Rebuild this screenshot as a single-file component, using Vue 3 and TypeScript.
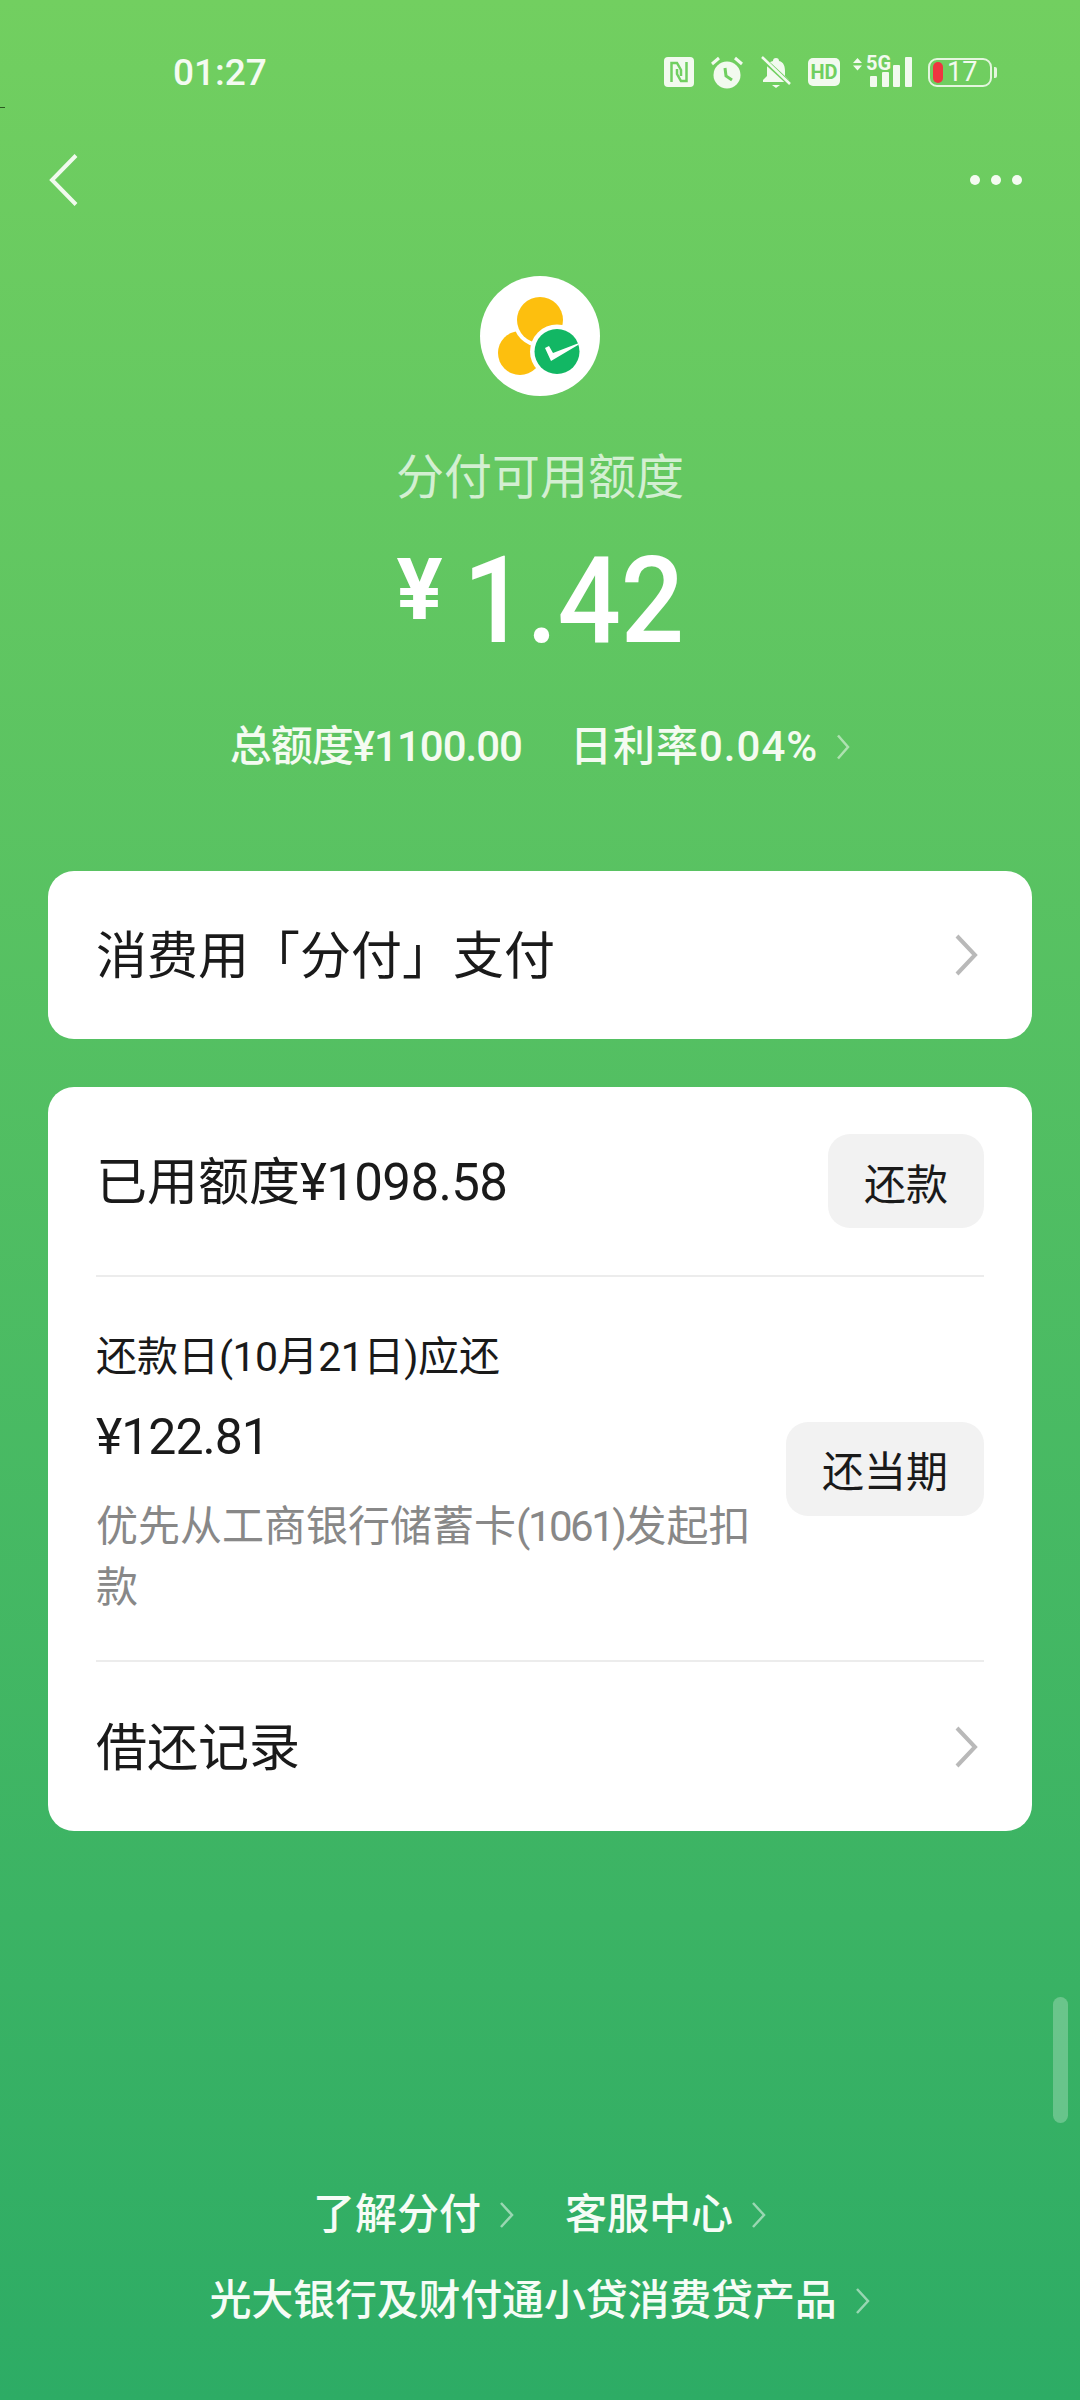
<script setup lang="ts">
const bars = [
  { x: 0, y: 19, h: 11 },
  { x: 12, y: 15, h: 15 },
  { x: 23, y: 8, h: 22 },
  { x: 35, y: 0, h: 30 }
]
</script>

<template>
  <div class="page">
    <span class="speck"></span>
    <div class="status">
      <span class="time">01:27</span>
      <div class="status__icons">
        <svg class="ic" width="30" height="30" viewBox="0 0 30 30">
          <rect width="30" height="30" rx="4" fill="#f2faef" />
          <path d="M7.500 25V6H13l4 7v6M22.500 5v19H17l-4-7v-5" fill="none" stroke="#70cf60" stroke-width="2.500" />
        </svg>
        <svg class="ic" width="34" height="33" viewBox="0 0 34 33">
          <circle cx="17" cy="19" r="13.5" fill="#f2faef" />
          <path d="M2 8l7-6M32 8l-7-6" stroke="#f2faef" stroke-width="3" fill="none" />
          <path d="M15 12l1 8 6 4" stroke="#70cf60" stroke-width="3" fill="none" />
        </svg>
        <svg class="ic" width="32" height="32" viewBox="0 0 32 32">
          <path d="M16 2a3 3 0 0 1 3 3c5 1 6 6 6 10v5l4 4v2H3v-2l4-4v-8c0-4 2-6 6-7a3 3 0 0 1 3-3z" fill="#f2faef" />
          <path d="M12 29h8l-4 3z" fill="#f2faef" />
          <path d="M2 2l28 26" stroke="#70cf60" stroke-width="5" />
          <path d="M2 1l28 27" stroke="#f2faef" stroke-width="2.5" />
        </svg>
        <svg class="ic ic--hd" width="32" height="28" viewBox="0 0 32 28">
          <rect width="32" height="28" rx="5" fill="#f2faef" />
          <text x="16" y="20.5" text-anchor="middle" class="ic__hd">HD</text>
        </svg>
        <svg class="ic ic--net" width="60" height="36" viewBox="0 0 60 36">
          <path d="M0 12l4.500-5 4.500 5zM0 14.500l4.500 5 4.500-5z" fill="#f2faef" />
          <text x="13" y="19" class="ic__fiveg">5G</text>
          <rect
            v-for="bar in bars"
            :key="bar.x"
            :x="bar.x + 17"
            :y="bar.y + 6"
            width="7"
            :height="bar.h"
            rx="1"
            fill="#f2faef"
          />
        </svg>
        <div class="battery">
          <span class="battery__level"></span>
          <span class="battery__num">17</span>
          <span class="battery__tip"></span>
        </div>
      </div>
    </div>

    <div class="nav">
      <svg width="32" height="54" viewBox="0 0 32 54">
        <path d="M27 2.500L3 27l24 24.500" fill="none" stroke="#f1faee" stroke-width="4" />
      </svg>
      <div class="nav__dots">
        <span></span>
        <span></span>
        <span></span>
      </div>
    </div>

    <div class="hero">
      <svg class="hero__logo" width="120" height="120" viewBox="0 0 120 120">
        <circle cx="60" cy="60" r="60" fill="#fff" />
        <circle cx="40" cy="77" r="22" fill="#fdbf0e" />
        <circle cx="60" cy="44" r="27" fill="#fff" />
        <circle cx="60" cy="44" r="23" fill="#fdbf0e" />
        <circle cx="77" cy="75.500" r="27" fill="#fff" />
        <circle cx="77" cy="75.500" r="22.500" fill="#12b764" />
        <path d="M65 72l4-2 4 7 26-10-1 2-27 16z" fill="#fff" />
      </svg>
      <div class="hero__title">分付可用额度</div>
      <div class="hero__amount">
        <span class="hero__yen">¥</span>
        <span class="hero__num">1.42</span>
      </div>
      <div class="hero__info">
        <span class="hero__total">总额度¥1100.00</span>
        <span class="hero__rate">日利率0.04%</span>
        <svg class="chev-sm" width="14" height="26" viewBox="0 0 14 26">
          <path d="M2 1.500l10 11.500-10 11.500" fill="none" stroke="#fff" stroke-opacity="0.5" stroke-width="2.500" />
        </svg>
      </div>
    </div>

    <div class="card card--pay">
      <span class="text-lg">消费用「分付」支付</span>
      <svg class="chev" width="24" height="42" viewBox="0 0 24 42">
        <path d="M3 2l18 19-18 19" fill="none" stroke="#b9b9b9" stroke-width="4" />
      </svg>
    </div>

    <div class="card card--used">
      <div class="row row--used">
        <span class="text-lg">已用额度<span class="narrow">¥1098.58</span></span>
        <button type="button" class="btn">还款</button>
      </div>
      <div class="row row--due">
        <div class="due">
          <div class="due__label">还款日<span class="narrow">(10</span>月<span class="narrow">21</span>日<span class="narrow">)</span>应还</div>
          <div class="due__amount">¥122.81</div>
          <div class="due__note">优先从工商银行储蓄卡<span class="narrower">(1061)</span>发起扣<br />款</div>
        </div>
        <button type="button" class="btn btn--wide">还当期</button>
      </div>
      <div class="row row--log">
        <span class="text-lg">借还记录</span>
        <svg class="chev" width="24" height="42" viewBox="0 0 24 42">
          <path d="M3 2l18 19-18 19" fill="none" stroke="#b9b9b9" stroke-width="4" />
        </svg>
      </div>
    </div>

    <div class="footer">
      <div class="footer__row">
        <span>了解分付</span>
        <svg class="chev-sm" width="16" height="28" viewBox="0 0 16 28">
          <path d="M2 2l11 12-11 12" fill="none" stroke="#fff" stroke-opacity="0.5" stroke-width="2.500" />
        </svg>
        <span class="footer__gap">客服中心</span>
        <svg class="chev-sm" width="16" height="28" viewBox="0 0 16 28">
          <path d="M2 2l11 12-11 12" fill="none" stroke="#fff" stroke-opacity="0.5" stroke-width="2.500" />
        </svg>
      </div>
      <div class="footer__row">
        <span class="footer__long">光大银行及财付通小贷消费贷产品</span>
        <svg class="chev-sm" width="16" height="28" viewBox="0 0 16 28">
          <path d="M2 2l11 12-11 12" fill="none" stroke="#fff" stroke-opacity="0.5" stroke-width="2.500" />
        </svg>
      </div>
    </div>

    <div class="scrollbar"></div>
  </div>
</template>

<style scoped>
.page {
  position: relative;
  display: flex;
  flex-direction: column;
  height: 2400px;
  overflow: hidden;
  background: linear-gradient(180deg, #72cf60 0%, #2dac65 100%);
  font-family: Roboto, "Noto Sans CJK SC", sans-serif;
  color: #fff;
}

.speck {
  position: absolute;
  left: 0;
  top: 107px;
  width: 5px;
  height: 1px;
  background: #2a5a20;
}

.status {
  display: flex;
  align-items: center;
  justify-content: space-between;
  height: 144px;
  padding: 0 88px 0 173px;
  box-sizing: border-box;
}

.time {
  font-size: 37px;
  font-weight: 500;
  color: #f4fbf1;
}

.status__icons {
  display: flex;
  align-items: center;
  gap: 16px;
}

.ic {
  display: block;
}

.ic__hd {
  font: 700 20px Roboto, sans-serif;
  fill: #70cf60;
}

.ic__fiveg {
  font: 700 20px Roboto, sans-serif;
  fill: #f2faef;
}

.ic--hd {
  margin-right: -3px;
}

.ic--net {
  margin-top: -6px;
  margin-right: -1px;
}

.battery {
  position: relative;
  display: flex;
  align-items: center;
  width: 64px;
  height: 29px;
  padding-left: 3px;
  box-sizing: border-box;
  border: 2px solid #e4f6de;
  border-radius: 9px;
}

.battery__level {
  width: 10px;
  height: 21px;
  border-radius: 5px;
  background: #ee3540;
}

.battery__num {
  margin-left: 4px;
  font-size: 27px;
  line-height: 25px;
  color: #f2faef;
}

.battery__tip {
  position: absolute;
  right: -7px;
  top: 7px;
  width: 3px;
  height: 11px;
  border-radius: 0 2px 2px 0;
  background: #e4f6de;
}

.nav {
  display: flex;
  align-items: center;
  justify-content: space-between;
  height: 72px;
  padding: 0 58px 0 49px;
}

.nav__dots {
  display: flex;
  gap: 11px;
}

.nav__dots span {
  width: 10px;
  height: 10px;
  border-radius: 50%;
  background: #f4fbf1;
}

.hero {
  display: flex;
  flex-direction: column;
  align-items: center;
  margin-top: 60px;
}

.hero__logo {
  display: block;
}

.hero__title {
  margin-top: 52px;
  font-size: 48px;
  line-height: 60px;
  color: rgba(255, 255, 255, 0.72);
}

.hero__amount {
  display: flex;
  align-items: flex-start;
  height: 130px;
  margin-top: 26px;
}

.hero__yen {
  margin-top: 16px;
  font-size: 86px;
  line-height: 80px;
  font-weight: 700;
}

.hero__num {
  margin-left: 20px;
  font-size: 120px;
  line-height: 134px;
  font-weight: 500;
  transform: scaleX(0.93);
  transform-origin: left center;
  margin-right: -17px;
}

.hero__info {
  display: flex;
  align-items: center;
  height: 50px;
  margin-top: 58px;
  font-size: 42px;
  line-height: 50px;
  font-weight: 500;
  color: #f4fbf1;
}

.hero__total {
  letter-spacing: -1px;
}

.hero__rate {
  margin-left: 48px;
  letter-spacing: 1px;
}

.chev-sm {
  display: block;
  margin-left: 18px;
}

.card {
  margin: 0 48px;
  padding: 0 48px;
  background: #fff;
  border-radius: 26px;
  color: #1a1a1a;
}

.card--pay {
  display: flex;
  align-items: center;
  justify-content: space-between;
  height: 168px;
  margin-top: 99px;
}

.card--used {
  margin-top: 48px;
}

.chev {
  display: block;
  margin-right: 6px;
}

.text-lg {
  padding-top: 4px;
  font-size: 51px;
  line-height: 60px;
}

.narrow {
  letter-spacing: -0.6px;
}

.narrower {
  letter-spacing: -2.5px;
}

.row {
  display: flex;
  align-items: center;
  justify-content: space-between;
}

.row--used {
  height: 188px;
  border-bottom: 2px solid #ececec;
}

.row--due {
  height: 383px;
  border-bottom: 2px solid #ececec;
}

.row--log {
  height: 169px;
}

.btn {
  width: 156px;
  height: 94px;
  padding: 0;
  border: none;
  border-radius: 22px;
  background: #f2f2f2;
  color: #1a1a1a;
  font: 400 42px Roboto, "Noto Sans CJK SC", sans-serif;
}

.btn--wide {
  width: 198px;
}

.due {
  width: 680px;
  padding-top: 12px;
}

.due__label {
  font-size: 41px;
  line-height: 50px;
}

.due__amount {
  margin-top: 30px;
  font-size: 50px;
  line-height: 50px;
  letter-spacing: -1px;
}

.due__note {
  margin-top: 34px;
  font-size: 42px;
  line-height: 61px;
  color: #888;
}

.footer {
  display: flex;
  flex-direction: column;
  gap: 26px;
  align-items: center;
  margin-top: auto;
  padding-bottom: 69px;
  font-size: 42px;
  line-height: 60px;
  font-weight: 500;
  color: #f6fcf6;
}

.footer__row {
  display: flex;
  align-items: center;
}

.footer__gap {
  margin-left: 50px;
}

.footer__long {
  letter-spacing: -0.2px;
}

.scrollbar {
  position: absolute;
  left: 1053px;
  top: 1997px;
  width: 15px;
  height: 126px;
  border-radius: 8px;
  background: rgba(255, 255, 255, 0.25);
}
</style>
